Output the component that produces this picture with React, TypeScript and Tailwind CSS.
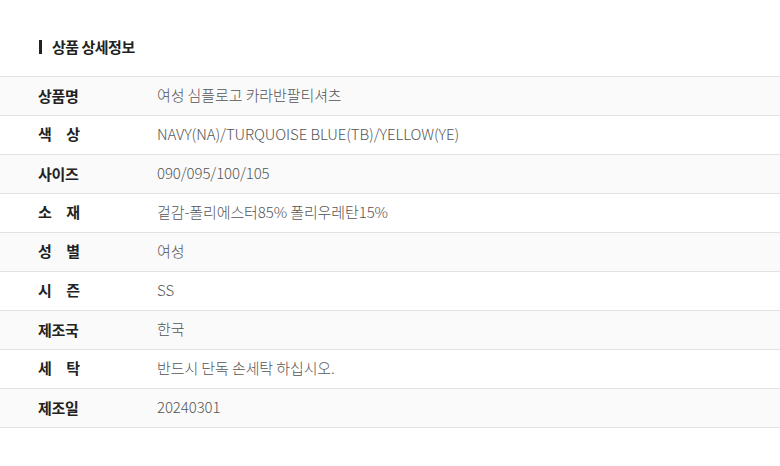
import React from 'react';

const ROWS = [
  { label: '상품명', value: '여성 심플로고 카라반팔티셔츠' },
  { label: '색상', value: 'NAVY(NA)/TURQUOISE BLUE(TB)/YELLOW(YE)' },
  { label: '사이즈', value: '090/095/100/105' },
  { label: '소재', value: '겉감-폴리에스터85% 폴리우레탄15%' },
  { label: '성별', value: '여성' },
  { label: '시즌', value: 'SS' },
  { label: '제조국', value: '한국' },
  { label: '세탁', value: '반드시 단독 손세탁 하십시오.' },
  { label: '제조일', value: '20240301' },
];

export default function App() {
  return (
    <div
      className="w-[780px] h-[466px] bg-white overflow-hidden"
      style={{ fontFamily: '"Noto Sans CJK KR", "Noto Sans", sans-serif' }}
    >
      <div className="flex items-center h-[14px] mt-[40px] pl-[39px]">
        <span className="w-[3px] h-[14px] bg-[#222]" />
        <h2 className="ml-[10px] text-[15px] font-bold text-[#222] tracking-[-0.5px]">상품 상세정보</h2>
      </div>
      <div className="mt-[22px] border-t border-[#e2e2e2]">
        {ROWS.map((row, i) => (
          <div
            key={row.label}
            className={`flex items-center h-[39px] pb-[1px] border-b border-[#e2e2e2] ${i % 2 === 0 ? 'bg-[#fafafa]' : 'bg-white'}`}
          >
            <div className="w-[157px] pl-[38px] shrink-0">
              {row.label.length === 2 ? (
                <span className="flex justify-between w-[42px] text-[15px] font-bold text-[#222]">
                  <span>{row.label[0]}</span>
                  <span>{row.label[1]}</span>
                </span>
              ) : (
                <span className="text-[15px] font-bold text-[#222] tracking-[-0.3px]">{row.label}</span>
              )}
            </div>
            <div className="text-[15px] font-light text-[#555] tracking-[-0.1px]">{row.value}</div>
          </div>
        ))}
      </div>
    </div>
  );
}
